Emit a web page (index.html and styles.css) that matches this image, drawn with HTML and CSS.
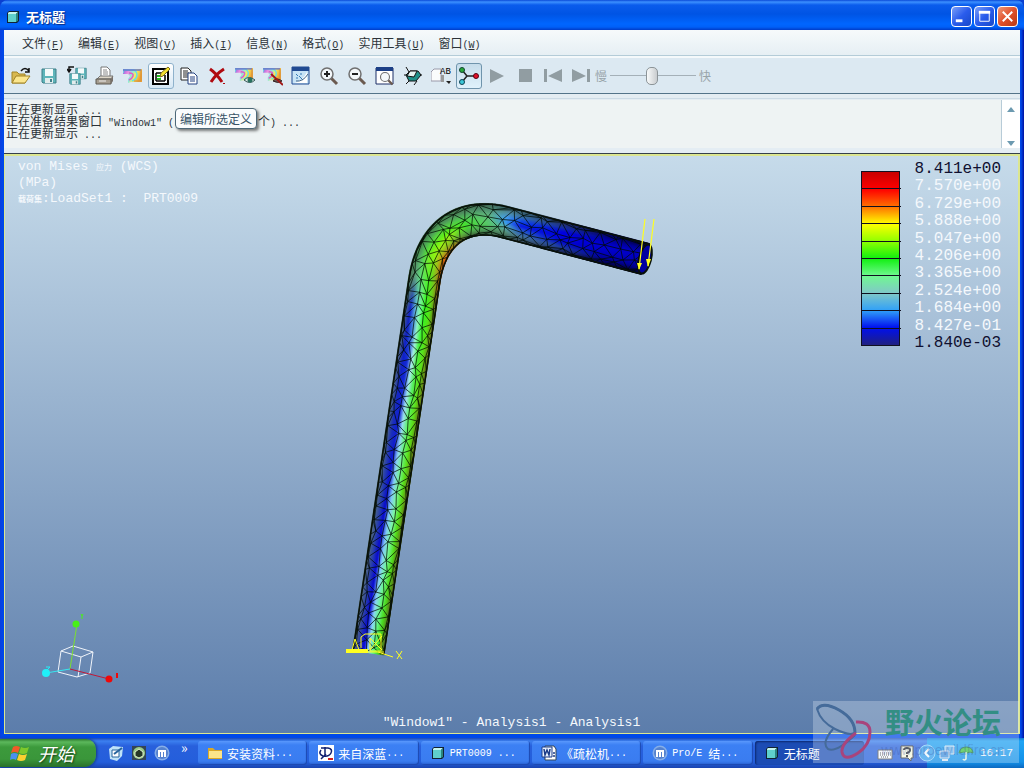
FILE: index.html
```html
<!DOCTYPE html>
<html lang="zh-CN">
<head>
    <meta charset="UTF-8">
    <meta name="viewport" content="width=device-width, initial-scale=1.0">
    <title>无标题</title>
    <link rel="stylesheet" href="styles.css">
</head>
<body>

<svg class="defs" aria-hidden="true">
    <defs>
        <linearGradient id="rainbow" x1="0" y1="0" x2="1" y2="0.3">
            <stop offset="0" stop-color="#7d6ae0"/>
            <stop offset="0.3" stop-color="#f08ae0"/>
            <stop offset="0.5" stop-color="#8ae8e0"/>
            <stop offset="0.7" stop-color="#f4f060"/>
            <stop offset="1" stop-color="#f0a030"/>
        </linearGradient>
        <symbol id="cube" viewBox="0 0 14 14">
            <path d="M1 3L3 1h10v10l-2 2H1z" fill="#123"/>
            <path d="M2 4h8v8H2z" fill="#5fd0cc"/>
            <path d="M2 3l1-1h9l-2 2H2z" fill="#c5f5f0"/>
            <path d="M10 4l2-2v9l-2 1z" fill="#2a8580"/>
        </symbol>
        <symbol id="disk" viewBox="0 0 16 16">
            <path d="M1 1h14v14H2l-1-1z" fill="#5fb5ba" stroke="#3c7d86"/>
            <path d="M4 1h8v7H4z" fill="#f4fafa"/>
            <path d="M4 10h8v5H4z" fill="#e2ecec"/>
            <path d="M9 11h2v3H9z" fill="#42818a"/>
        </symbol>
        <symbol id="contour" viewBox="0 0 20 16">
            <path d="M0 1h19v13H8l-3 1v-4l2-3-2-2H0z" fill="url(#rainbow)"/>
            <path d="M0 5V2h10q4 1 4 5t-5 6" fill="none" stroke="#66dfe8" stroke-width="1.500"/>
            <path d="M6 5q5 0 4 3t-4 4" fill="none" stroke="#e05ac8" stroke-width="1.500"/>
            <path d="M0 2h18" stroke="#6874c8" stroke-width="1.500"/>
            <path d="M18 2v11h-7" fill="none" stroke="#d09040"/>
        </symbol>
        <symbol id="lens" viewBox="0 0 20 20">
            <path d="M12 12l6 6" stroke="#6b5a50" stroke-width="3"/>
            <circle cx="8" cy="8" r="6" fill="#f4f8fa" stroke="#707070" stroke-width="1.5"/>
        </symbol>
        <symbol id="maxthon" viewBox="0 0 16 16">
            <circle cx="8" cy="8" r="7.500" fill="#86aee8"/>
            <circle cx="8" cy="8" r="6" fill="#5582cf"/>
            <path d="M4 12V5h8v7h-2V7H9v5H7V7H6v5z" fill="#fff"/>
        </symbol>
    </defs>
</svg>

<div class="desktop">
    <main class="window">
        <header class="titlebar">
            <svg class="icon14"><use href="#cube"/></svg>
            <h1>无标题</h1>
            <div class="window-buttons">
                <button class="winbtn" aria-label="最小化"><svg viewBox="0 0 20 20"><path d="M4 13h7v3H4z" fill="#fff"/></svg></button>
                <button class="winbtn" aria-label="最大化"><svg viewBox="0 0 20 20"><path d="M5 6h10v9H5z" fill="none" stroke="#fff"/><path d="M4 4h12v3H4z" fill="#fff"/></svg></button>
                <button class="winbtn close" aria-label="关闭"><svg viewBox="0 0 20 20"><path d="M5 5l10 10M15 5L5 15" stroke="#fff" stroke-width="2"/></svg></button>
            </div>
        </header>

        <nav class="menubar">
            <button>文件<span class="half">(<u>F</u>)</span></button>
            <button>编辑<span class="half">(<u>E</u>)</span></button>
            <button>视图<span class="half">(<u>V</u>)</span></button>
            <button>插入<span class="half">(<u>I</u>)</span></button>
            <button>信息<span class="half">(<u>N</u>)</span></button>
            <button>格式<span class="half">(<u>O</u>)</span></button>
            <button>实用工具<span class="half">(<u>U</u>)</span></button>
            <button>窗口<span class="half">(<u>W</u>)</span></button>
        </nav>

        <div class="toolbar">
            <button class="tool" aria-label="打开"><svg viewBox="0 0 20 20"><path d="M1 17V6h5l2 2h6v9z" fill="#d8b850" stroke="#a18427"/><path d="M1 17l4-7h14l-5 7z" fill="#fbe68d" stroke="#a18427"/><path d="M10 5q4-5 8 0M18 2v4h-4" fill="none" stroke="#111" stroke-width="1.500"/></svg></button>
            <button class="tool" aria-label="保存"><svg viewBox="0 0 20 20"><use href="#disk" x="2" y="2" width="16" height="16"/></svg></button>
            <button class="tool" aria-label="保存副本"><svg viewBox="0 0 20 20"><use href="#disk" x="8" y="1" width="12" height="13"/><use href="#disk" x="2" y="7" width="12" height="12"/><path d="M7 1H2v4M0 3l2 3 2-3" fill="none" stroke="#111" stroke-width="1.500"/></svg></button>
            <button class="tool" aria-label="打印"><svg viewBox="0 0 20 20"><path d="M6 11V1h6l3 3v7z" fill="#fff" stroke="#777"/><path d="M8 4h4M8 6h5M8 8h5" stroke="#888"/><path d="M2 13l3-3h13l-2 3z" fill="#ddd6c8" stroke="#777"/><path d="M1 13h15v5H1z" fill="#a59d90" stroke="#5d5850"/><path d="M16 13l2-3v5l-2 3z" fill="#77706a"/><path d="M4 15h7" stroke="#eee"/></svg></button>
            <button class="tool" aria-label="云图"><svg viewBox="0 0 20 20"><use href="#contour" x="0" y="2" width="20" height="16"/></svg></button>
            <button class="tool hover" aria-label="编辑所选定义" aria-describedby="tip"><svg viewBox="0 0 20 20"><path d="M2 3h15v15H2z" fill="#fff" stroke="#000" stroke-width="2"/><path d="M5 7h7M5 7v8M5 15h9M14 9v6" fill="none" stroke="#000" stroke-width="1.500"/><path d="M6 10h3M6 13h4" stroke="#2b2" stroke-width="2"/><path d="M9 11l1-4 7-6 2 2-7 7z" fill="#f4e030" stroke="#7b6c20"/></svg></button>
            <button class="tool" aria-label="复制"><svg viewBox="0 0 20 20"><path d="M2 2h7l3 3v9H2z" fill="#fff" stroke="#222"/><path d="M4 5h5M4 7h6M4 9h5M4 11h5" stroke="#222"/><path d="M9 7h6l3 3v8H9z" fill="#fff" stroke="#234080"/><path d="M11 11h5M11 13h5M11 15h5" stroke="#234080"/></svg></button>
            <button class="tool" aria-label="删除"><svg viewBox="0 0 20 20"><path d="M3 3q6 4 12 13M17 3Q9 8 4 16" fill="none" stroke="#b00a10" stroke-width="3"/><path d="M16 17h2v1h-2z" fill="#b00a10"/></svg></button>
            <button class="tool" aria-label="显示"><svg viewBox="0 0 20 20"><use href="#contour" x="0" y="1" width="19" height="15"/><path d="M9 14q5-5 11 0-5 5-11 0z" fill="#d8e8e0" stroke="#355"/><circle cx="15" cy="14" r="2.500" fill="#287060"/></svg></button>
            <button class="tool" aria-label="取消显示"><svg viewBox="0 0 20 20"><use href="#contour" x="0" y="1" width="19" height="15"/><path d="M10 15q4-4 9 0-4 3-9 0z" fill="#6a5a5a" stroke="#322"/><path d="M8 8l12 11" stroke="#a01818" stroke-width="2"/></svg></button>
            <button class="tool" aria-label="图形"><svg viewBox="0 0 20 20"><path d="M1 1h17v17H1z" fill="#c8e4f6" stroke="#204a92"/><path d="M1 1h17v4H1z" fill="#204a92"/><path d="M3 17q8-1 13-11v11z" fill="#fff"/><path d="M5 8l2 2M10 7v2M5 12h2M8 10l4 4" stroke="#357bb5"/><path d="M5 15q7 1 12-7" fill="none" stroke="#468"/></svg></button>
            <button class="tool" aria-label="放大"><svg viewBox="0 0 20 20"><use href="#lens" width="20" height="20"/><path d="M5 8h6M8 5v6" stroke="#222" stroke-width="2"/></svg></button>
            <button class="tool" aria-label="缩小"><svg viewBox="0 0 20 20"><use href="#lens" width="20" height="20"/><path d="M5 8h6" stroke="#222" stroke-width="2"/></svg></button>
            <button class="tool" aria-label="重新调整"><svg viewBox="0 0 20 20"><path d="M1 2h17v16H1z" fill="#fff" stroke="#1c2f66"/><path d="M1 1h17v4H1z" fill="#1c3f86"/><use href="#lens" x="4" y="5" width="15" height="15"/></svg></button>
            <button class="tool" aria-label="重定向"><svg viewBox="0 0 20 20"><path d="M3 1l3 5M1 9h18M3 18l4-4M14 15l-3 4" stroke="#111"/><path d="M3 9l4-4h8l3 4-5 6H6z" fill="#1f8f88" stroke="#111"/><path d="M4 10l3-5h7l-3 6z" fill="#e7f4f3" stroke="#111"/></svg></button>
            <button class="tool" aria-label="保存的视图"><svg viewBox="0 0 20 20"><path d="M0 6l3-3h7v12H0z" fill="#fafcfc" stroke="#99a"/><path d="M10 9h3v7h-3z" fill="#999"/><path d="M15 15h5l-2 3z" fill="#222"/><text x="9" y="8" class="ab">AB</text></svg></button>
            <button class="tool pressed" aria-label="坐标系"><svg viewBox="0 0 20 20"><path d="M3 4l5 6h9M8 10l-5 6" fill="none" stroke="#222" stroke-width="1.500"/><circle cx="3" cy="4" r="2.500" fill="#28a838" stroke="#143"/><circle cx="17" cy="10" r="2.500" fill="#e01028" stroke="#501"/><circle cx="3" cy="16" r="2.500" fill="#3cc8d8" stroke="#145"/></svg></button>
            <button class="tool" aria-label="播放"><svg viewBox="0 0 20 20"><path d="M3 3l14 7-14 7z" fill="#919da2"/></svg></button>
            <button class="tool" aria-label="停止"><svg viewBox="0 0 20 20"><path d="M4 3h13v13H4z" fill="#919da2"/></svg></button>
            <button class="tool" aria-label="上一帧"><svg viewBox="0 0 20 20"><path d="M1 3h3v13H1zM19 3v13L5 10z" fill="#919da2"/></svg></button>
            <button class="tool" aria-label="下一帧"><svg viewBox="0 0 20 20"><path d="M16 3h3v13h-3zM1 3v13l14-6z" fill="#919da2"/></svg></button>
            <div class="speed">
                <label for="speed">慢</label>
                <input id="speed" type="range" min="0" max="100" value="49">
                <label for="speed">快</label>
            </div>
        </div>

        <section class="messages">
            <div class="log">
                <p>正在更新显示<span class="half"> ...</span></p>
                <p>正在准备结果窗口<span class="half"> "Window1" (</span><span class="covered"></span>个<span class="half">) ...</span></p>
                <p>正在更新显示<span class="half"> ...</span></p>
            </div>
            <div class="scroller">
                <button aria-label="向上"><svg viewBox="0 0 8 5"><path d="M0 5l4-5 4 5z" fill="#6c9ab0"/></svg></button>
                <button aria-label="向下"><svg viewBox="0 0 8 5"><path d="M0 0l4 5 4-5z" fill="#6c9ab0"/></svg></button>
            </div>
            <div class="tooltip" id="tip" role="tooltip">编辑所选定义</div>
        </section>

        <section class="viewer">
            <div class="result-info">
                <p>von Mises <small>应力</small> (WCS)</p>
                <p>(MPa)</p>
                <p><small class="heavy">载荷集</small>:LoadSet1 :  PRT0009</p>
            </div>

            <div class="legend">
                <div class="scale"><i></i><i></i><i></i><i></i><i></i><i></i><i></i><i></i><i></i><i></i></div>
                <ul class="values">
                    <li>8.411e+00</li>
                    <li>7.570e+00</li>
                    <li>6.729e+00</li>
                    <li>5.888e+00</li>
                    <li>5.047e+00</li>
                    <li>4.206e+00</li>
                    <li>3.365e+00</li>
                    <li>2.524e+00</li>
                    <li>1.684e+00</li>
                    <li>8.427e-01</li>
                    <li>1.840e-03</li>
                </ul>
            </div>

            <div class="model">
                <canvas id="mesh" width="330" height="470"></canvas>
                <svg viewBox="340 195 330 470">
                    <g stroke="#ffff20" fill="#ffff20">
                        <path d="M645 219l-6 50M654 219l-6 47" stroke-width="1.200"/>
                        <path d="M637 263h5l-3 7zM646 259h5l-3 8z" stroke="none"/>
                        <path d="M346 649h22v4h-22z" stroke="none"/>
                        <path d="M364 652h20M378 652l15 5M352 650l3-11 4 11M361 648v-11l4-3h16v17h-11v-13l12 12M370 650l12-14" fill="none"/>
                        <path d="M396 651l6 8M402 651l-5 8" fill="none"/>
                    </g>
                </svg>
            </div>

            <svg class="triad" viewBox="0 0 90 80">
                <path d="M22 42l12-5 20 6-3 21-13 4-19-5zM22 42l20 6 12-5M42 48l-3 20" fill="none" stroke="#f0f4fa"/>
                <path d="M31 60l7-45" stroke="#7be030"/>
                <path d="M31 60L7 64" stroke="#35e8f0"/>
                <path d="M31 60l39 10" stroke="#c01838"/>
                <circle cx="37" cy="15" r="3.500" fill="#48f018"/>
                <circle cx="7" cy="64" r="4" fill="#20f0f8"/>
                <circle cx="70" cy="70" r="3.500" fill="#f00808"/>
                <path d="M42 5l1 2 1-2M43 7v3" fill="none" stroke="#48f018"/>
                <path d="M7 58h4l-3 3" fill="none" stroke="#20f0f8"/>
                <path d="M78 64v5" stroke="#f00808" stroke-width="2"/>
            </svg>

            <p class="caption">"Window1" - Analysis1 - Analysis1</p>
        </section>
    </main>

    <footer class="taskbar">
        <button class="start">
            <svg viewBox="0 0 20 20"><path d="M3 4q3-2 7 0L8 10Q5 8 1 10z" fill="#f05a28"/><path d="M11 4q4 2 8 0l-2 6q-4 2-8 0z" fill="#7dc82c"/><path d="M1 11q3-2 7 0l-2 6q-3-2-6 0z" fill="#4a90f0"/><path d="M9 11q4 2 8 0l-2 6q-4 2-8 0z" fill="#fcd030"/></svg>
            开始
        </button>
        <div class="quick">
            <button aria-label="显示桌面"><svg viewBox="0 0 16 16"><path d="M1 4l4-3 10 1-1 9-5 5-7-2z" fill="#bfe3f8"/><path d="M4 5h7v7H4z" fill="#fff" stroke="#27659c"/><path d="M6 9l8-6" stroke="#27659c" stroke-width="2"/></svg></button>
            <button aria-label="安全卫士"><svg viewBox="0 0 16 16"><path d="M1 1h14v14H1z" fill="#345"/><circle cx="8" cy="8" r="6" fill="#9acb86"/><path d="M8 4l4 3v4l-4 2-4-2V7z" fill="#263826" stroke="#dfeecf"/></svg></button>
            <button aria-label="遨游"><svg><use href="#maxthon"/></svg></button>
            <span class="more">»</span>
        </div>
        <div class="tasks">
            <button><svg viewBox="0 0 16 16"><path d="M1 3h5l2 2h7v9H1z" fill="#d9a828"/><path d="M2 6h13v7H2z" fill="#fbe58a"/></svg>安装资料<span class="half">...</span></button>
            <button><svg viewBox="0 0 16 16"><path d="M0 0h16v16H0z" fill="#fff"/><path d="M7 11V2M3 3h7q5 1 3 5t-8 3Q0 9 3 5M3 14l5-5" fill="none" stroke="#102070" stroke-width="1.500"/><path d="M10 13h5v2h-5z" fill="#d02020"/></svg>来自深蓝<span class="half">...</span></button>
            <button><svg viewBox="-1 -1 16 16"><use href="#cube" width="14" height="14"/></svg><span class="half">PRT0009 ...</span></button>
            <button><svg viewBox="0 0 16 16"><path d="M4 1h9l2 3v11H4z" fill="#fff" stroke="#345"/><path d="M1 2h10v10H1z" fill="#e8f0fc" stroke="#1c3c88"/><path d="M3 4l1 6 2-5 2 5 1-6M12 8h2M12 11h2" fill="none" stroke="#1c3c88" stroke-width="1.500"/></svg>《疏松机<span class="half">...</span></button>
            <button><svg><use href="#maxthon"/></svg><span class="half">Pro/E </span>结<span class="half">...</span></button>
            <button class="active"><svg viewBox="-1 -1 16 16"><use href="#cube" width="14" height="14"/></svg>无标题</button>
        </div>
        <div class="langbar">
            <svg viewBox="0 0 16 16"><path d="M1 5h14v9H1z" fill="#fff" stroke="#555"/><path d="M3 8h11M3 10h11M4 12h8" stroke="#333" stroke-dasharray="1 1"/></svg>
            <svg viewBox="0 0 16 16"><path d="M2 1h12v12h-2v3l-3-3H2z" fill="#fffce0" stroke="#333"/><path d="M5 5q0-2 3-2t3 2-3 3v1M8 10v2" fill="none" stroke="#222" stroke-width="2"/></svg>
        </div>
        <div class="tray">
            <button class="expand" aria-label="显示隐藏的图标"><svg viewBox="0 0 18 18"><circle cx="9" cy="9" r="8" fill="#35a0ee" stroke="#8fd0fa"/><path d="M11 5L7 9l4 4" fill="none" stroke="#fff" stroke-width="2"/></svg></button>
            <svg viewBox="0 0 16 16"><path d="M6 1h9v8H6z" fill="#6ab8f0" stroke="#dde8f4"/><path d="M1 6h9v7H1z" fill="#4492de" stroke="#dde8f4"/><path d="M3 15h6" stroke="#dde8f4" stroke-width="2"/></svg>
            <svg viewBox="0 0 16 16"><path d="M1 8q1-6 8-6 6 1 6 6l-3-1-3 1-3-1z" fill="#3fc83a" stroke="#208a30"/><path d="M8 7v7q-2 2-3 0" fill="none" stroke="#e8f8e0" stroke-width="1.500"/></svg>
            <time class="half">16:17</time>
        </div>
    </footer>

    <div class="watermark">
        <svg viewBox="0 0 60 62">
            <g fill="none">
                <path d="M4 8Q10 0 26 9t16 23q-6 3-20-4T4 8zM20 28q-12 14-5 20 8 4 27-14" stroke="#456b9a" stroke-width="2"/>
                <path d="M4 8Q10 0 26 9t16 23" stroke="#456b9a" stroke-width="3"/>
                <path d="M43 21q14-1 14 10 0 13-12 21-14 9-16-1-1-8 14-19" stroke="#a8447c" stroke-width="3"/>
            </g>
        </svg>
        <div class="watermark-text">
            <strong>野火论坛</strong>
            <span>www.proewildfire.cn</span>
        </div>
    </div>
</div>

<script src="mesh.js"></script>
</body>
</html>
```

FILE: styles.css
```css
* {
    box-sizing: border-box;
}
body {
    margin: 0;
    background: #0a3fd0;
    font-family: "Noto Sans CJK SC", sans-serif;
    font-size: 12px;
    color: #2b3238;
}
p, h1, ul {
    margin: 0;
    padding: 0;
}
button {
    padding: 0;
    border: none;
    background: none;
    font: inherit;
    color: inherit;
}
.defs {
    position: absolute;
    width: 0;
    height: 0;
}
.half {
    font-family: "Liberation Mono", monospace;
    font-size: 10px;
    white-space: pre;
}
.desktop {
    position: relative;
    display: flex;
    flex-direction: column;
    height: 100vh;
}

/* window */
.window {
    flex: 1;
    min-height: 0;
    display: flex;
    flex-direction: column;
    padding: 0 4px 4px;
    background: linear-gradient(90deg, #0a3fe0, #0048e8 3px, #0048e8 calc(100% - 3px), #0010a0);
    border-radius: 8px 8px 0 0;
}
.titlebar {
    flex: none;
    display: flex;
    align-items: center;
    gap: 6px;
    height: 30px;
    margin: 0 -4px;
    padding: 3px 6px 0;
    border-radius: 8px 8px 0 0;
    background: linear-gradient(#0a4ad8, #3c90ff 2px, #0a5cec 5px, #0054e4 14px, #0066ff 24px, #0060f8 27px, #003cc8);
    color: #fff;
}
.titlebar h1 {
    flex: 1;
    font-size: 13px;
    line-height: 18px;
    text-shadow: 1px 1px 1px #0a2a80;
}
.icon14 {
    width: 14px;
    height: 14px;
}
.window-buttons {
    display: flex;
    gap: 2px;
}
.winbtn {
    width: 21px;
    height: 21px;
    border: 1px solid #fff;
    border-radius: 4px;
    background: linear-gradient(135deg, #7b9ff8, #2a5cec 50%, #1848c8);
}
.winbtn svg {
    display: block;
    width: 19px;
    height: 19px;
}
.winbtn.close {
    background: linear-gradient(135deg, #f09878, #e0502c 50%, #b83810);
}

/* menu and toolbar */
.menubar {
    flex: none;
    display: flex;
    gap: 14px;
    height: 26px;
    padding: 0 18px;
    background: linear-gradient(#f6fafb, #e6eff4);
    border-bottom: 1px solid #b4ccd8;
}
.menubar button {
    line-height: 25px;
}
.toolbar {
    flex: none;
    display: flex;
    align-items: center;
    height: 38px;
    padding: 0 3px;
    background: #dce9f2;
    border-top: 2px solid #f4f9fb;
    border-bottom: 1px solid #54748a;
}
.tool {
    display: flex;
    align-items: center;
    justify-content: center;
    width: 26px;
    height: 26px;
    margin: 0 1px;
    border: 1px solid transparent;
    border-radius: 3px;
}
.tool svg {
    flex: none;
    width: 20px;
    height: 20px;
}
.tool.hover {
    background: linear-gradient(#fff, #d4e6f4);
    border-color: #8fb2cc;
}
.tool.pressed {
    background: linear-gradient(#c6dcea, #e0f2fc);
    border-color: #6f94ac;
}
.ab {
    font-family: "Liberation Mono", monospace;
    font-size: 9px;
}
.speed {
    display: flex;
    align-items: center;
    gap: 3px;
    color: #98a4aa;
}
.speed input {
    width: 86px;
    height: 20px;
    margin: 0;
    appearance: none;
    background: linear-gradient(#a4b0b8, #a4b0b8) center / 100% 1px no-repeat;
}
.speed input::-webkit-slider-thumb {
    appearance: none;
    width: 12px;
    height: 18px;
    border: 1px solid #8c9498;
    border-radius: 5px;
    background: linear-gradient(90deg, #f8fafa, #c8cccf);
}

/* message area */
.messages {
    position: relative;
    flex: none;
    display: flex;
    height: 60px;
    padding: 6px 0 5px;
    background: linear-gradient(#ccdbe6, #ccdbe6) 0 4px / 100% 1px no-repeat, #e4edf3;
    border-bottom: 1px solid #35404a;
}
.log {
    flex: 1;
    padding: 3px 2px;
    background: #eef3f3;
}
.log p {
    height: 12px;
    line-height: 12px;
    white-space: pre;
}
/* part of the line that stays behind the tooltip */
.covered {
    display: inline-block;
    width: 84px;
}
.scroller {
    display: flex;
    flex-direction: column;
    justify-content: space-between;
    width: 19px;
    padding: 2px 5px;
    border-left: 1px solid #b8ccd8;
    background: #fff;
}
.scroller svg {
    width: 8px;
    height: 5px;
}
.scroller button {
    line-height: 10px;
}
.tooltip {
    position: absolute;
    left: 171px;
    top: 14px;
    padding: 0 4px;
    border: 1px solid #4d6878;
    border-radius: 4px;
    background: #fafcfd;
    box-shadow: 2px 2px 3px rgba(0, 0, 0, 0.5);
    line-height: 19px;
    color: #385468;
}

/* result view */
.viewer {
    position: relative;
    flex: 1;
    min-height: 0;
    overflow: hidden;
    border: 2px solid #dce690;
    border-width: 2px 2px 1px 1px;
    background: linear-gradient(#c6dbea, #5c7dab);
    color: #f4f8fc;
    font-family: "Liberation Mono", "Noto Sans CJK SC", monospace;
    font-size: 13px;
}
.result-info {
    padding: 3px 13px;
}
.result-info p {
    height: 16px;
    line-height: 16px;
    white-space: pre;
}
.result-info small {
    font-size: 8px;
}
.result-info .heavy {
    font-weight: bold;
}
.legend {
    position: absolute;
    top: 5px;
    right: 17px;
    display: flex;
    gap: 15px;
    font-size: 16px;
}
.scale {
    display: flex;
    flex-direction: column;
    width: 39px;
    height: 175px;
    margin-top: 10px;
    border: 1px solid #101020;
    background: linear-gradient(#c80000, #ff0000 10%, #ff7000 20%, #ffff00 30%, #90ff00 40%, #10f010 50%, #70f890 60%, #80c8c8 70%, #30a0f8 80%, #0010f0 90%, #202080);
}
.scale i {
    flex: 1;
    margin-right: -2px;
    border-bottom: 1px solid #101020;
}
.scale i:last-child {
    border: none;
}
.values {
    display: flex;
    flex-direction: column;
    justify-content: space-between;
    height: 191px;
    list-style: none;
    line-height: 17px;
}
.values li:first-child,
.values li:last-child {
    color: #101030;
}
.model {
    position: absolute;
    left: 335px;
    top: 39px;
    width: 330px;
    height: 470px;
}
.model canvas,
.model svg {
    position: absolute;
    left: 0;
    top: 0;
    width: 330px;
    height: 470px;
}
.triad {
    position: absolute;
    left: 34px;
    bottom: 44px;
    width: 90px;
    height: 80px;
}
.caption {
    position: absolute;
    left: 0;
    right: 0;
    bottom: 2px;
    line-height: 16px;
    text-align: center;
}

/* taskbar */
.taskbar {
    flex: none;
    display: flex;
    align-items: center;
    height: 30px;
    background: linear-gradient(#1c48b8, #3c80f0 3px, #2860dc 8px, #245edb 24px, #1a44b0);
    color: #fff;
}
.taskbar svg {
    flex: none;
    width: 16px;
    height: 16px;
}
.start {
    display: flex;
    align-items: center;
    gap: 8px;
    width: 96px;
    height: 28px;
    padding-left: 10px;
    border-radius: 0 10px 12px 0;
    background: linear-gradient(#2f7c2f, #5cb85c 3px, #3c9a3c 8px, #3a963a 20px, #2a702a);
    box-shadow: 1px 0 3px #123a80;
    font-size: 18px;
    font-style: italic;
    text-shadow: 1px 1px 2px #143c14;
}
.start svg {
    width: 20px;
    height: 20px;
}
.quick {
    display: flex;
    align-items: center;
    gap: 7px;
    width: 102px;
    padding-left: 12px;
}
.quick button {
    display: flex;
}
.more {
    height: 24px;
    padding-left: 4px;
    line-height: 12px;
    font-size: 14px;
}
.tasks {
    flex: 1;
    display: flex;
    gap: 2px;
    max-width: 666px;
}
.tasks button {
    flex: 1;
    min-width: 0;
    display: flex;
    align-items: center;
    height: 24px;
    padding-left: 9px;
    overflow: hidden;
    border-radius: 3px;
    background: linear-gradient(#5a98fc, #3c80f4 4px, #3a7cf0 20px, #2a62d4);
    box-shadow: inset -1px -1px 1px #1c48b0;
    white-space: nowrap;
}
.tasks button svg {
    margin-right: 4px;
}
.tasks button.active {
    background: #1c4cb4;
    box-shadow: inset 1px 1px 2px #0c2870;
}
.langbar {
    display: flex;
    gap: 6px;
    margin-left: auto;
    padding: 0 12px 0 8px;
}
.tray {
    display: flex;
    align-items: center;
    gap: 3px;
    height: 30px;
    padding-right: 11px;
    background: linear-gradient(#0e78d0, #20a4f4 3px, #1290e8 24px, #0c68c0);
}
.tray .expand {
    display: flex;
    margin-left: -9px;
}
.tray .expand svg {
    width: 18px;
    height: 18px;
}
.tray time {
    padding-left: 3px;
    font-size: 11px;
}

/* forum mark */
.watermark {
    position: absolute;
    right: 5px;
    bottom: 5px;
    display: flex;
    width: 206px;
    height: 62px;
    background: rgba(230, 238, 250, 0.3);
    pointer-events: none;
}
.watermark svg {
    flex: none;
    width: 60px;
    height: 62px;
}
.watermark-text {
    display: flex;
    flex-direction: column;
    align-items: center;
    width: 140px;
}
.watermark strong {
    line-height: 40px;
    font-size: 29px;
    font-weight: bold;
    color: #338e84;
}
.watermark span {
    line-height: 18px;
    font-family: "Liberation Sans", sans-serif;
    font-size: 14px;
    color: rgba(50, 70, 150, 0.25);
}
```

FILE: mesh.js
```js
// bent rod: a straight leg, an elbow and an arm
const canvas = document.getElementById("mesh");
const ctx = canvas.getContext("2d");
ctx.translate(-340, -195);

const RADIUS = 15.5;
const points = [];

function buildCentreLine() {
    const raw = [];
    for (let i = 0; i <= 380; i++) {
        const t = i / 380;
        raw.push([368.5 + 56 * t, 652 - 372 * t]);
    }
    const b = [[424.5, 280], [431, 237], [458, 213], [500, 221]];
    for (let i = 1; i <= 110; i++) {
        const t = i / 110, s = 1 - t;
        raw.push([0, 1].map(k => s*s*s*b[0][k] + 3*s*s*t*b[1][k] + 3*s*t*t*b[2][k] + t*t*t*b[3][k]));
    }
    for (let i = 1; i <= 150; i++) {
        const t = i / 150;
        raw.push([500 + 145 * t, 221 + 38 * t]);
    }
    for (let i = 0; i < raw.length; i++) {
        const a = raw[Math.max(0, i - 3)], c = raw[Math.min(raw.length - 1, i + 3)];
        const dx = c[0] - a[0], dy = c[1] - a[1], len = Math.hypot(dx, dy);
        points.push({ x: raw[i][0], y: raw[i][1], nx: -dy / len, ny: dx / len });
    }
}

// v runs from -1 on the outer side to 1 on the inner side
function at(i, v) {
    const p = points[Math.max(0, Math.min(points.length - 1, Math.round(i)))];
    return [p.x + p.nx * RADIUS * v, p.y + p.ny * RADIUS * v];
}

// stress colours across the rod at stations along it
const STOPS = [-1, -0.6, -0.3, 0, 0.3, 0.65, 1];
const STATIONS = [
    [0,   ["5a7078", "2838b0", "0808d8", "90d8f8", "60f888", "48d820", "506020"]],
    [150, ["5a7478", "2840b0", "0808d0", "80c8f8", "80f8a8", "58e018", "687018"]],
    [300, ["587078", "1020c8", "1830d8", "b0f0f0", "48f040", "60e018", "687018"]],
    [350, ["587478", "1020c8", "60b0e0", "80f8b0", "30f820", "58e018", "706818"]],
    [382, ["487050", "60a080", "60d880", "60e850", "48f020", "80c020", "a05010"]],
    [405, ["407048", "50b058", "58e038", "80f018", "98f018", "b8b018", "e05010"]],
    [430, ["407048", "50a058", "58d840", "60f018", "a0f018", "80c028", "986818"]],
    [455, ["406848", "509060", "50c058", "48e038", "48e030", "50b048", "406038"]],
    [480, ["406050", "509070", "60b080", "60c078", "58c868", "50a060", "385840"]],
    [497, ["385860", "5090a8", "4098f0", "3898f0", "58b0b8", "589070", "385848"]],
    [512, ["385860", "3870a0", "1048e8", "0818e0", "2860d0", "487898", "384850"]],
    [555, ["283050", "1830a0", "0000e0", "0000e0", "0008d0", "2040a0", "202848"]],
    [600, ["080840", "0000a0", "0000c8", "0000d0", "0000c0", "000098", "080838"]],
    [645, ["000030", "000088", "0000b8", "0000c0", "0000b0", "000090", "000028"]]
];

function rgb(hex) {
    return [0, 2, 4].map(k => parseInt(hex.substr(k, 2), 16));
}
function mix(a, b, t) {
    return a.map((c, k) => c + (b[k] - c) * t);
}
function across(colours, v) {
    let k = 0;
    while (k < STOPS.length - 2 && v > STOPS[k + 1]) k++;
    return mix(rgb(colours[k]), rgb(colours[k + 1]), (v - STOPS[k]) / (STOPS[k + 1] - STOPS[k]));
}
function colourAt(i, v) {
    let k = 0;
    while (k < STATIONS.length - 2 && i > STATIONS[k + 1][0]) k++;
    const a = STATIONS[k], b = STATIONS[k + 1];
    return mix(across(a[1], v), across(b[1], v), Math.min(1, (i - a[0]) / (b[0] - a[0])));
}

function drawSurface() {
    for (let i = 0; i < points.length; i++) {
        for (let v = -1; v < 1; v += 0.06) {
            const p = at(i, v);
            ctx.fillStyle = "rgb(" + colourAt(i, v).map(Math.round).join(",") + ")";
            ctx.fillRect(p[0] - 1, p[1] - 1, 2, 2);
        }
    }
}

let seed = 11;
function random() {
    seed = (seed * 16807) % 2147483647;
    return seed / 2147483647;
}

function line(a, b) {
    ctx.beginPath();
    ctx.moveTo(a[0], a[1]);
    ctx.lineTo(b[0], b[1]);
    ctx.stroke();
}

function drawMesh() {
    const cols = [-1, -0.8, -0.25, 0.3, 0.8, 1];
    const rows = [];
    for (let i = 0; i < points.length + 8; i += 13) {
        rows.push(cols.map((v, k) => {
            const edge = k === 0 || k === cols.length - 1;
            return at(i + (k % 2) * 6 + random() * 8 - 4, edge ? v : v + random() * 0.3 - 0.15);
        }));
    }
    ctx.strokeStyle = "rgba(0, 10, 0, 0.9)";
    ctx.lineWidth = 0.8;
    for (let r = 0; r < rows.length; r++) {
        for (let k = 0; k < cols.length; k++) {
            if (k + 1 < cols.length) line(rows[r][k], rows[r][k + 1]);
            if (r + 1 < rows.length) {
                line(rows[r][k], rows[r + 1][k]);
                if (k + 1 < cols.length) {
                    if (k % 2) line(rows[r][k], rows[r + 1][k + 1]);
                    else line(rows[r + 1][k], rows[r][k + 1]);
                }
            }
        }
    }
}

function drawOutline() {
    ctx.strokeStyle = "#081008";
    ctx.lineWidth = 1.5;
    [-1, 1].forEach(side => {
        ctx.beginPath();
        for (let i = 0; i < points.length; i++) ctx.lineTo(...at(i, side));
        ctx.stroke();
    });
    // open end of the arm
    ctx.beginPath();
    ctx.ellipse(645, 259, 6, 15, 0.25, 0, Math.PI * 2);
    ctx.fillStyle = "#0000a0";
    ctx.fill();
    ctx.lineWidth = 2;
    ctx.stroke();
}

buildCentreLine();
drawSurface();
drawMesh();
drawOutline();
```
